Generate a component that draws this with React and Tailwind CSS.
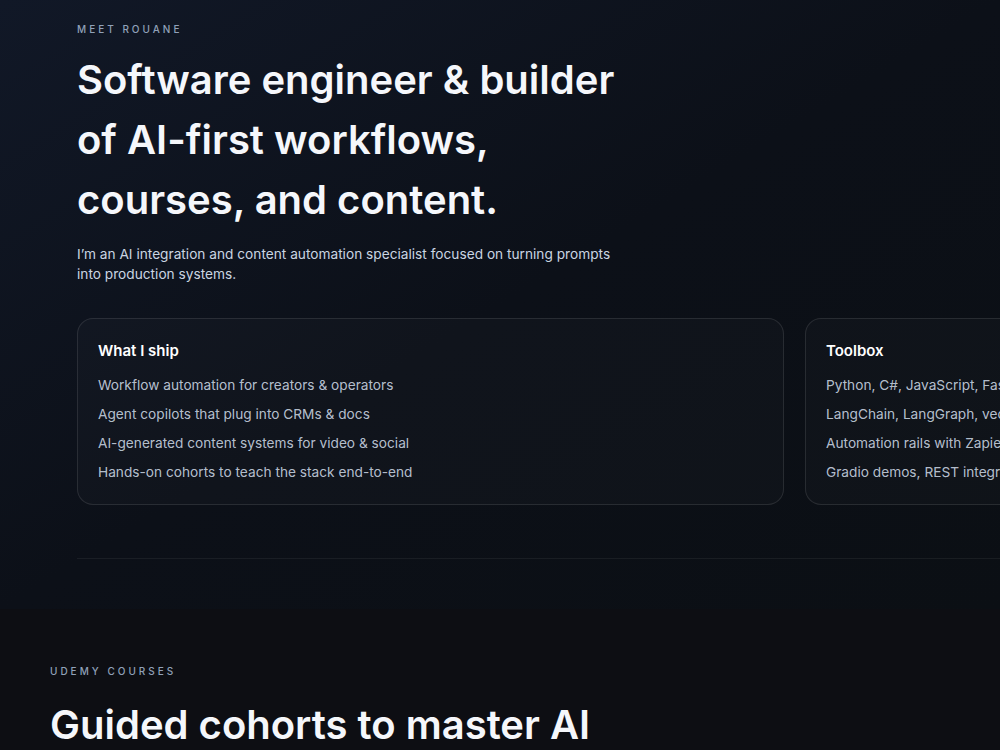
const shipping = [
  'Workflow automation for creators & operators',
  'Agent copilots that plug into CRMs & docs',
  'AI-generated content systems for video & social',
  'Hands-on cohorts to teach the stack end-to-end',
];

const toolbox = [
  'Python, C#, JavaScript, FastAPI, Node',
  'LangChain, LangGraph, vector stores, RAG',
  'Automation rails with Zapier, Make & n8n',
  'Gradio demos, REST integrations, webhooks',
];

function InfoCard({ title, items }) {
  return (
    <div className="rounded-2xl border border-white/10 bg-white/[0.02] px-5 pt-[21px] pb-[22px]">
      <h3 className="text-[15px] font-semibold leading-[22px] text-white">{title}</h3>
      <ul className="mt-[13px] space-y-[9px]">
        {items.map((item) => (
          <li key={item} className="whitespace-nowrap text-[13.7px] leading-[20px] text-slate-300/90">
            {item}
          </li>
        ))}
      </ul>
    </div>
  );
}

export default function App() {
  return (
    <div className="min-h-screen w-full overflow-hidden bg-[#0d0e13] font-['Inter',sans-serif] text-slate-100">
      <section className="bg-gradient-to-br from-[#111827] via-[#0c1018] to-[#0b0f14] pt-[23px] pb-[50px]">
        <div className="pl-[77px]">
          <p className="text-[10px] font-medium uppercase leading-[12px] tracking-[0.3em] text-slate-400">Meet Rouane</p>
          <h1 className="mt-[15px] text-[40px] font-semibold leading-[60px] text-[#f5f7fb]">
            Software engineer &amp; builder
            <br />
            of AI-first workflows,
            <br />
            courses, and content.
          </h1>
          <p className="mt-[14px] w-[550px] text-[13.7px] leading-[20px] text-slate-300">
            I’m an AI integration and content automation specialist focused on turning prompts into production systems.
          </p>
          <div className="mt-[34px] grid w-[1440px] grid-cols-[707px_707px] gap-[21px]">
            <InfoCard title="What I ship" items={shipping} />
            <InfoCard title="Toolbox" items={toolbox} />
          </div>
          <div className="mt-[53px] h-px w-[1440px] bg-white/[0.06]" />
        </div>
      </section>

      <section className="pl-[50px] pt-[56px] pb-16">
        <p className="text-[10px] font-medium uppercase leading-[12px] tracking-[0.3em] text-slate-400">Udemy courses</p>
        <h2 className="mt-[23px] text-[40px] font-semibold leading-[50px] text-[#f5f7fb]">
          Guided cohorts to master AI
        </h2>
      </section>
    </div>
  );
}
